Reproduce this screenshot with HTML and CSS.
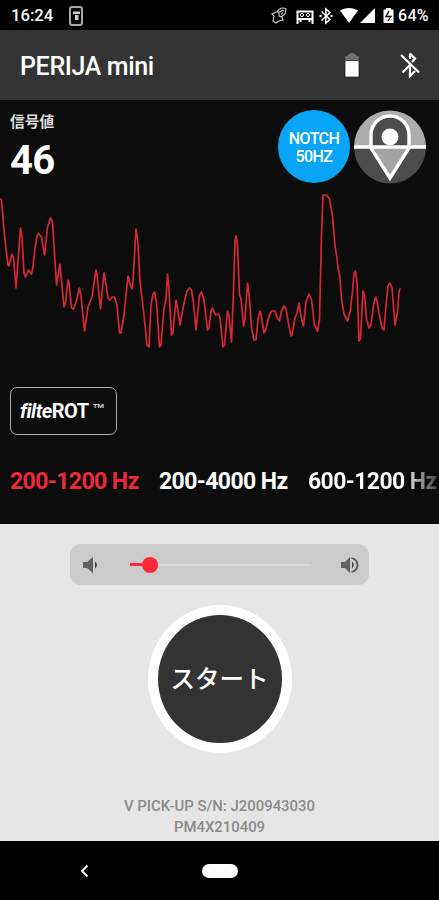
FILE: index.html
```
<!DOCTYPE html>
<html lang="ja">
<head>
  <meta charset="UTF-8">
  <title>PERIJA mini</title>
  <link rel="stylesheet" href="styles.css">
</head>
<body>

  <div class="status-bar">
    <span class="clock">16:24</span>
    <svg class="sim" width="14" height="20" viewBox="0 0 14 20">
      <rect x="1" y="1" width="12" height="18" rx="2" fill="none" stroke="#aaa" stroke-width="2"/>
      <path d="M4 5.500h7v2.500H4zM6 9h3.500v5H6z" fill="#ccc"/>
    </svg>
    <svg class="status-icons" width="126" height="20" viewBox="270 6 126 20">
      <path d="M276 12l-4 2 2 2-1 5 3 2 3-2 4-1-1-3-3-1v-4zM277 12c2-4 6-5 9-3l-1 5-4 3M280 12c2-2 3-2 4-1M281 14l2-1" fill="none" stroke="#ccc" stroke-width="1.200"/>
      <path d="M297.500 24V11.500h15V24M298 19h14M300.500 19v3M309.500 19v3" fill="none" stroke="#fff" stroke-width="2"/>
      <circle cx="302" cy="15" r="1.600" fill="none" stroke="#fff"/>
      <circle cx="308" cy="15" r="1.600" fill="none" stroke="#fff"/>
      <path d="M321.500 11.500l8.500 8-4.200 3.500V9l4.200 3.500-8.500 8" fill="none" stroke="#fff" stroke-width="1.600"/>
      <path d="M319.500 15h2v2h-2zM330.500 15h2v2h-2z" fill="#fff"/>
      <path d="M340 10.500c5-3.500 13-3.500 18 0L349 23z" fill="#fff"/>
      <path d="M375 8v15h-15z" fill="#fff"/>
      <path d="M386 8h5v1.500h2.500V23h-10V9.500h2.500z" fill="#fff"/>
      <path d="M389 11l-3 5.500h5L388 21" fill="none" stroke="#000" stroke-width="1.300"/>
    </svg>
    <span class="percent">64%</span>
  </div>

  <header class="app-bar">
    <h1>PERIJA mini</h1>
    <svg class="battery" width="16" height="26" viewBox="0 0 16 26">
      <path d="M1 8.500V6q0-2 2.500-2.500Q5 1 8 1t4.500 2.500Q15 4 15 6v2.500z" fill="#707070"/>
      <rect x="1" y="8.500" width="14" height="16.500" rx="1" fill="#fff" stroke="#111" stroke-width=".7"/>
    </svg>
    <svg class="bt-off" width="22" height="28" viewBox="0 0 22 28">
      <path d="M2 4l18 17.500M3.500 21.500L12 13M11 2.500V8M11 2.500l5 5-3 3.500M11 15v10l5-5" fill="none" stroke="#fff" stroke-width="2.200"/>
    </svg>
  </header>

  <main class="signal">
    <div class="signal-top">
      <div class="reading">
        <div class="label">信号値</div>
        <div class="value">46</div>
      </div>
      <div class="notch">NOTCH<br>50HZ</div>
      <svg class="locator" width="72" height="74" viewBox="0 0 72 74">
        <path d="M0 37a36 36.500 0 0 1 72 0z" fill="#adadad"/>
        <path d="M0 37a36 36.500 0 0 0 72 0z" fill="#4c4c4c"/>
        <path d="M17 36V25a19 19 0 0 1 38 0v11z" fill="#4c4c4c"/>
        <path d="M17 38h38L36 68z" fill="#a4a4a4"/>
        <path d="M17 38V25a19 19 0 0 1 38 0v13L36 68z" fill="none" stroke="#fff" stroke-width="3.400"/>
        <path d="M0 37h72" stroke="#fff" stroke-width="3.600"/>
        <circle cx="36" cy="27" r="8.500" fill="#fff"/>
      </svg>
    </div>

    <svg class="wave" width="439" height="175" viewBox="0 185 439 175">
      <polyline points="0,199 1.500,200 3,218 5,240 8,265 9,266 12,254 13.500,258 16,288 20.500,228 22,237 24,273 25.500,277 28.500,270 31.500,274 33,267 35,248 37,236 38.500,233.500 41.500,237 44.500,255 47.500,227 50.500,218 52.500,222 56.500,285 60,264 64,307 65.500,303 68,280 69,283 71.500,308 73.500,309 76,302 79.500,288 81,296 84.500,331 88,307 92,297 96,270 97,275 100.500,309 104,273 105.500,281 108,298 110,300 112,297 114.500,297 117,305 119.500,333 121,333 124,315 128,276 129.500,282 132,289 133,282 136,229 138,243 140,282 144,315 147,345 149,347 151,305 153,294 154.500,292 156.500,302 159.500,347 161,345 164,308 166,299 167.500,274 169,290 171.500,335 173,332 176,300 177.500,308 180,325 184,303 187,291 189.500,288 191.500,290 193.500,303 196,330 199.500,295 201.500,292 204,300 207.500,330 209,328 211,311 212.500,308 215.500,315 218.500,314 220,318 223,347 224.500,345 227.500,311 229,316 231.500,342 233.500,290 235,241 236,236 237.500,245 239.500,295 241,298 243.500,326 245,319 247.500,283 249.500,299 251.500,328 254,340 256,340 258,319 260,311 261,314 264,333 266,329 268,320 270,314 271.500,311 275,311 277.500,318 279.500,321 281.500,311 284,306 286,309 288,321 291,336 292,335 295,318 297,313 299,303 301,317 303.500,326 306,302 309,294 311.500,300 314.500,325 317.500,331 319.500,320 321.500,235 323,195 326.500,195 329.500,199 332.500,216 335,246 337,258 338,268 340,278 341.500,299 344,314 347.500,321 350.500,310 352.500,292 354,273 355.500,271 357,283 359,341 360.500,338 363,291 364.500,295 366.500,319 369,328 371,325 373.500,305 375.500,297 377,301 379,313 382,328 384,330 386,306 388,286 390,283 392,288 395,325 397.500,312 399,292 400,289" fill="none" stroke="#d82737" stroke-width="1.700" stroke-linejoin="round" stroke-linecap="round"/>
    </svg>

    <button class="filterot"><i>filte</i>ROT <span class="tm">™</span></button>

    <div class="bands">
      <span class="band active">200-1200 Hz</span>
      <span class="band">200-4000 Hz</span>
      <span class="band last">600-1200 Hz</span>
    </div>
  </main>

  <section class="controls">
    <div class="volume">
      <svg class="vol-low" width="18" height="18" viewBox="0 0 18 18">
        <path d="M1 6h4l6-5v16l-6-5H1z" fill="#626262"/>
        <path d="M13 5.500q4 3.500 0 7z" fill="#444"/>
      </svg>
      <div class="track">
        <div class="fill"></div>
        <div class="thumb"></div>
        <div class="rest"></div>
      </div>
      <svg class="vol-high" width="18" height="18" viewBox="0 0 18 18">
        <path d="M0 6h4l5-5v16l-5-5H0z" fill="#626262"/>
        <path d="M11 5.500q3.500 3.500 0 7z" fill="#444"/>
        <path d="M10.500 2c8 2 8 12 0 14" fill="none" stroke="#555" stroke-width="1.800"/>
      </svg>
    </div>
    <button class="start">スタート</button>
    <p class="serial">V PICK-UP S/N: J200943030<br>PM4X210409</p>
  </section>

  <nav class="nav-bar">
    <svg class="back" width="10" height="14" viewBox="0 0 10 14">
      <path d="M8.500 1.500L3 7l5.500 5.500" fill="none" stroke="#fff" stroke-width="1.900"/>
    </svg>
    <div class="home"></div>
  </nav>

</body>
</html>
```
FILE: styles.css
```
* {
  box-sizing: border-box;
}

body {
  margin: 0;
  width: 439px;
  height: 900px;
  overflow: hidden;
  background: #000;
  color: #fff;
  font-family: Roboto, "Noto Sans CJK JP", sans-serif;
}

svg {
  display: block;
  flex: none;
}

button {
  font-family: inherit;
  color: #fff;
  margin: 0;
  padding: 0;
}

.status-bar {
  display: flex;
  align-items: center;
  height: 30px;
  padding: 1px 8px 0 11px;
  font-size: 16.7px;
  font-weight: 500;
}

.clock {
  width: 58px;
}

.status-icons {
  margin-left: auto;
}

.percent {
  width: 33px;
  margin-left: 2px;
  font-size: 16px;
  letter-spacing: 0.3px;
}

.app-bar {
  display: flex;
  align-items: center;
  height: 70px;
  padding: 0 18px 0 20px;
  background: #333;
}

.app-bar h1 {
  margin: 0;
  padding-top: 3px;
  font-size: 25px;
  font-weight: 500;
  letter-spacing: -0.35px;
}

.battery {
  margin-left: auto;
}

.bt-off {
  margin-left: 39px;
}

.signal {
  height: 424px;
  background: #0c0c0c;
}

.signal-top {
  display: flex;
  height: 85px;
  padding: 10px 13px 0 10px;
}

.reading {
  flex: 1;
}

.label {
  padding-top: 4px;
  font-size: 14.7px;
  line-height: 17px;
  font-weight: 700;
  color: #ddd;
}

.value {
  padding-top: 8px;
  font-size: 40px;
  line-height: 44px;
  font-weight: 700;
  letter-spacing: -0.7px;
}

.notch {
  width: 72px;
  height: 73px;
  margin-right: 4px;
  padding-top: 20px;
  border-radius: 50%;
  background: #08a4f5;
  text-align: center;
  font-size: 16px;
  line-height: 18px;
  font-weight: 500;
  letter-spacing: -0.6px;
}

.filterot {
  display: block;
  width: 107px;
  height: 48px;
  margin: 27px 0 0 10px;
  padding-left: 9px;
  border: 1px solid #aaa;
  border-radius: 7px;
  background: none;
  font-size: 20px;
  font-weight: 700;
  text-align: left;
  letter-spacing: -0.5px;
}

.tm {
  font-family: "Liberation Sans", sans-serif;
  font-size: 13px;
  line-height: 10px;
  vertical-align: 5px;
  color: #ccc;
}

.bands {
  display: flex;
  gap: 20.5px;
  padding: 33px 0 0 10px;
  white-space: nowrap;
  font-size: 23px;
  line-height: 28px;
  font-weight: 700;
  letter-spacing: -0.6px;
}

.active {
  color: #ed2939;
}

.last {
  background: linear-gradient(90deg, #fff 73%, #333 102%);
  -webkit-background-clip: text;
  background-clip: text;
  color: transparent;
}

.controls {
  display: flex;
  flex-direction: column;
  align-items: center;
  height: 317px;
  padding-top: 20px;
  background: #e6e6e6;
}

.volume {
  display: flex;
  align-items: center;
  width: 299px;
  height: 41px;
  padding: 0 10px 0 12px;
  border-radius: 11px;
  background: #cbcbcb;
}

.track {
  display: flex;
  align-items: center;
  width: 181px;
  margin-left: 30px;
}

.fill {
  width: 12px;
  height: 3px;
  background: #ff2938;
}

.thumb {
  width: 16px;
  height: 16px;
  border-radius: 50%;
  background: #ff2938;
}

.rest {
  flex: 1;
  height: 2px;
  background: #dadada;
}

.vol-high {
  margin-left: auto;
}

.start {
  width: 144px;
  height: 148px;
  margin-top: 20px;
  padding-bottom: 4px;
  border: 10px solid #fff;
  border-radius: 50%;
  background: #333;
  font-size: 24.5px;
  font-weight: 500;
}

.serial {
  margin: 43px 0 0;
  text-align: center;
  color: #8a8a8a;
  font-size: 14.9px;
  line-height: 21px;
  font-weight: 500;
}

.nav-bar {
  display: flex;
  align-items: center;
  height: 59px;
  padding-left: 79px;
}

.home {
  width: 36px;
  height: 14px;
  margin-left: 113px;
  border-radius: 7px;
  background: #fff;
}
```
